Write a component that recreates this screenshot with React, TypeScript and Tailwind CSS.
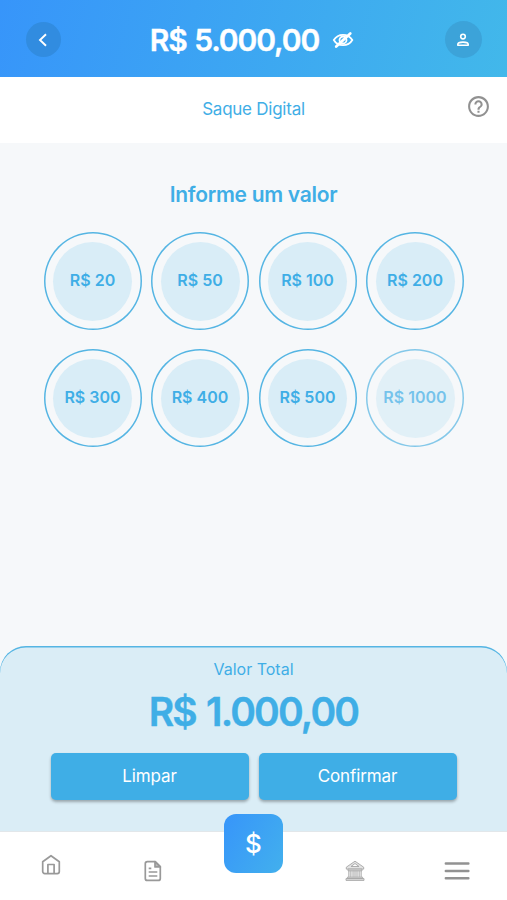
import clsx from "clsx";
import { MdHelpOutline } from "react-icons/md";

const amounts = [20, 50, 100, 200, 300, 400, 500, 1000];

const ChevronIcon = () => (
  <svg width="18" height="18" viewBox="0 0 18 18" fill="none" stroke="white" strokeWidth="1.900">
    <path d="M11 3.200 5 9l6 5.800" />
  </svg>
);

const EyeOffIcon = () => (
  <svg width="22" height="18" viewBox="0 0 22 18" fill="none" stroke="white" strokeLinecap="round">
    <path d="M1.800 9C4 5.400 7.200 3.800 11 3.800s7.200 1.600 9.300 5.200c-2.200 3.800-5.500 5.200-9.300 5.200S4 12.800 1.800 9Z" strokeWidth="1.800" />
    <circle cx="11" cy="9" r="3.500" strokeWidth="1.800" />
    <path d="M4.200 15.500 18.300 2.400" strokeWidth="2.700" />
    <path d="M9.800 9.500c0-1 .7-1.600 1.500-1.600" strokeWidth="1" />
  </svg>
);

const UserIcon = () => (
  <svg width="14" height="14" viewBox="0 0 14 14" fill="none" stroke="white" strokeWidth="1.600">
    <circle cx="7" cy="3.600" r="2.300" />
    <path d="M1.800 12.200v-.8c0-1.500 2.600-2.300 5.200-2.300s5.200.8 5.200 2.300v.8Z" strokeLinejoin="round" />
  </svg>
);

const HomeIcon = () => (
  <svg width="20" height="22" viewBox="0 0 20 22" fill="none" stroke="#999999" strokeWidth="1.700" strokeLinejoin="round">
    <path d="M1.700 7.800 10 1.700l8.300 6.100v9.800a2 2 0 0 1-2 2H3.700a2 2 0 0 1-2-2Z" />
    <path d="M6.900 19.500v-9h6.200v9" />
  </svg>
);

const DocumentIcon = () => (
  <svg width="18" height="22" viewBox="0 0 18 22" fill="none" stroke="#999999" strokeWidth="1.700" strokeLinejoin="round">
    <path d="M3.300 1.700h7.900l5.100 5v11.700a2 2 0 0 1-2 2h-11a2 2 0 0 1-2-2V3.700a2 2 0 0 1 2-2Z" />
    <path d="M11 1.700v5.200h5.300Z" fill="#bbbbbb" />
    <path d="M4.700 8.300h2.600M4.700 12h8.600M4.700 16h8.600" />
  </svg>
);

const BankIcon = () => (
  <svg width="20" height="22" viewBox="0 0 20 22" fill="#e3e3e3" stroke="#a6a6a6" strokeWidth="0.900" strokeLinejoin="round">
    <path d="M10 1.200 18.700 7.200v1.900H1.300V7.200Z" />
    <path d="M10 3.500 14 6.500H6Z" fill="white" />
    <path d="M3 9.100h14v8.100H3Z" stroke="none" />
    <path d="M3 9.100h14v1.700H3Z" />
    <path d="M3.700 10.800v6.400M5.700 10.800v6.400M8.100 10.800v6.400M10 10.800v6.400M12 10.800v6.400M14.300 10.800v6.400M16.300 10.800v6.400" strokeWidth="0.600" />
    <path d="M2.400 17.200h15.200v1.400H2.400ZM1 18.600h18v1.800H1Z" />
  </svg>
);

const MenuIcon = () => (
  <svg width="26" height="20" viewBox="0 0 26 20" stroke="#929292" strokeWidth="2.400" strokeLinecap="round">
    <path d="M1.800 2.500h22.600M1.800 10h22.600M1.800 17.300h22.600" />
  </svg>
);

const App = () => {
  return (
    <div className="flex h-[900px] w-full flex-col overflow-hidden bg-[#f6f8fa] font-['Inter','Liberation_Sans',sans-serif] text-[#3faee6]">
      <header className="flex h-[77px] shrink-0 items-center justify-between bg-linear-[105deg] from-[#3795fa] to-[#42b8ea] pt-[2px] pr-[25px] pl-[26px]">
        <button className="flex size-[35px] items-center justify-center rounded-full bg-[#318ce0]" aria-label="Voltar">
          <ChevronIcon />
        </button>
        <div className="mr-[2px] flex items-center gap-[13px]">
          <span className="text-[30px] leading-none font-semibold tracking-[-1.100px] whitespace-nowrap text-white [-webkit-text-stroke:0.400px_white] [word-spacing:1px]">
            R$ 5.000,00
          </span>
          <EyeOffIcon />
        </div>
        <button className="flex size-[37px] items-center justify-center rounded-full bg-[#3ca3d9]" aria-label="Perfil">
          <UserIcon />
        </button>
      </header>

      <div className="grid h-[66px] shrink-0 grid-cols-[1fr_auto_1fr] items-center bg-white">
        <h1 className="col-start-2 text-[17px] tracking-[-0.250px]">Saque Digital</h1>
        <MdHelpOutline className="mr-[16px] mb-[8px] size-[25px] justify-self-end text-[#919191]" />
      </div>

      <main className="flex flex-1 flex-col items-center pt-[37px]">
        <h2 className="text-[21px] leading-[30px] font-semibold tracking-[-0.300px]">Informe um valor</h2>
        <div className="mt-[22px] grid grid-cols-4 gap-x-[9.500px] gap-y-[19px] pl-[0.500px]">
          {amounts.map((amount) => (
            <button
              key={amount}
              className={clsx(
                "flex size-[98px] items-center justify-center rounded-full shadow-[inset_0_0_0_1.5px_#55b5e3]",
                amount === 1000 && "opacity-70"
              )}
            >
              <span className="flex size-[79px] items-center justify-center rounded-full bg-[#d9edf7] pb-[2px] text-[16px] font-semibold whitespace-nowrap">
                R$ {amount}
              </span>
            </button>
          ))}
        </div>
      </main>

      <section className="flex h-[185px] shrink-0 flex-col items-center rounded-t-[26px] bg-[#daedf6] pt-[11px] shadow-[inset_0_1.5px_0_#55b5e3]">
        <p className="text-[16px] leading-[24px]">Valor Total</p>
        <p className="mt-[9px] text-[39px] leading-[44px] font-semibold tracking-[-1.800px] [-webkit-text-stroke:0.400px_#3faee6] [word-spacing:2px]">
          R$ 1.000,00
        </p>
        <div className="mt-[19px] flex gap-[10px] text-[17px] tracking-[-0.100px] text-white">
          <button className="h-[47px] w-[198px] rounded-[5px] bg-[#3faee6] shadow-[0_2px_3px_rgba(0,0,0,0.3)]">Limpar</button>
          <button className="h-[47px] w-[198px] rounded-[5px] bg-[#3faee6] shadow-[0_2px_3px_rgba(0,0,0,0.3)]">Confirmar</button>
        </div>
      </section>

      <nav className="grid h-[69px] shrink-0 grid-cols-5 justify-items-center border-t border-[#e2e7ea] bg-white">
        <button className="mt-[22px] h-[22px]" aria-label="Início"><HomeIcon /></button>
        <button className="mt-[28px] ml-[2px] h-[22px]" aria-label="Extrato"><DocumentIcon /></button>
        <button className="-mt-[18px] flex size-[59px] items-center justify-center rounded-[12px] bg-linear-[120deg] from-[#3795fa] to-[#42b0ed] text-[26px] font-medium text-white">
          $
        </button>
        <button className="mt-[28px] h-[22px]" aria-label="Banco"><BankIcon /></button>
        <button className="mt-[29px] ml-[1px] h-[20px]" aria-label="Menu"><MenuIcon /></button>
      </nav>
    </div>
  );
};

export default App;
